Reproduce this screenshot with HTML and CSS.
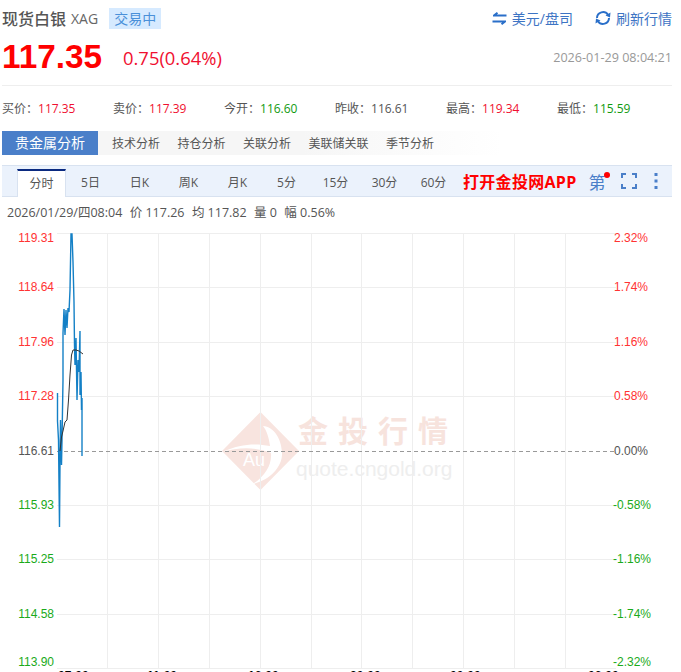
FILE: index.html
```html
<!DOCTYPE html>
<html lang="en">
<head>
    <meta charset="UTF-8">
    <title>现货白银 XAG</title>
    <link rel="stylesheet" href="styles.css">
</head>
<body>
    <div class="title-row">
        <span class="name">现货白银</span>
        <span class="code">XAG</span>
        <span class="badge">交易中</span>
        <span class="spacer"></span>
        <span class="action action-unit">
            <svg width="15" height="13" viewBox="0 0 15 13"><path d="M14.500 3.500H3M5.500 0.800L2 3.500V4.500M0.500 9.500H12M9.500 12.200L13 9.500V8.500" fill="none" stroke="#2a6fc9" stroke-width="2"/></svg>
            美元/盘司
        </span>
        <span class="action">
            <svg width="16" height="16" viewBox="0 0 16 16"><path d="M2 8A6 6 0 0 1 13 4.800M14 8A6 6 0 0 1 3 11.200" fill="none" stroke="#2a6fc9" stroke-width="2"/><path d="M15.500 2.500L15 7.500L10.500 5.500ZM0.500 13.500L1 8.500L5.500 10.500Z" fill="#2a6fc9"/></svg>
            刷新行情
        </span>
    </div>

    <div class="price-row">
        <span class="price">117.35</span>
        <span class="change">0.75(0.64%)</span>
        <span class="spacer"></span>
        <span class="time">2026-01-29 08:04:21</span>
    </div>

    <div class="quote-row">
        <div>买价：<span class="up">117.35</span></div>
        <div>卖价：<span class="up">117.39</span></div>
        <div>今开：<span class="down">116.60</span></div>
        <div>昨收：<span>116.61</span></div>
        <div>最高：<span class="up">119.34</span></div>
        <div>最低：<span class="down">115.59</span></div>
    </div>

    <div class="tabs">
        <a class="tab-main">贵金属分析</a>
        <a>技术分析</a>
        <a>持仓分析</a>
        <a>关联分析</a>
        <a>美联储关联</a>
        <a>季节分析</a>
    </div>

    <div class="toolbar">
        <a class="period active">分时</a>
        <a class="period">5日</a>
        <a class="period">日K</a>
        <a class="period">周K</a>
        <a class="period">月K</a>
        <a class="period">5分</a>
        <a class="period">15分</a>
        <a class="period">30分</a>
        <a class="period">60分</a>
        <a class="open-app">打开金投网APP</a>
        <span class="draw-btn">第<i class="dot"></i></span>
        <svg class="tool-icon" width="16" height="16" viewBox="0 0 16 16"><path d="M1 5V1H5M11 1H15V5M15 11V15H11M5 15H1V11" fill="none" stroke="#4a7fc9" stroke-width="2"/></svg>
        <svg class="tool-icon more" width="4" height="16" viewBox="0 0 4 16"><rect x="0.500" y="0" width="3" height="3" fill="#4a7fc9"/><rect x="0.500" y="6.500" width="3" height="3" fill="#4a7fc9"/><rect x="0.500" y="13" width="3" height="3" fill="#4a7fc9"/></svg>
    </div>

    <div class="info-row">
        <span>2026/01/29/四08:04</span>
        <span>价 117.26</span>
        <span>均 117.82</span>
        <span>量 0</span>
        <span>幅 0.56%</span>
    </div>

    <!-- chart canvas, coordinates are page y -->
    <svg class="chart" width="681" height="447" viewBox="0 225 681 447">
        <!-- watermark -->
        <path d="M260.500 412L299 451L260.500 490L222 451Z" fill="#f8e4df"/>
        <path d="M222 452C240 444 255 443 270 446C269 438 267 431 263 426C274 427 281 438 282 452C283 467 270 480 253 484C265 476 272 465 271 453C255 447 240 447 222 452Z" fill="#fff"/>
        <text class="wm-au" x="243" y="466">Au</text>
        <text class="wm-title" x="298" y="442">金投行情</text>
        <text class="wm-url" x="296" y="476">quote.cngold.org</text>

        <!-- grid -->
        <path class="grid" d="M57 233.500H616M57 287.500H616M57 342.500H616M57 396.500H616M57 505.500H616M57 559.500H616M57 614.500H616M57 668.500H616"/>
        <path class="grid" d="M107.500 234V668M158.500 234V668M209.500 234V668M260.500 234V668M311.500 234V668M361.500 234V668M412.500 234V668M463.500 234V668M514.500 234V668M565.500 234V668"/>
        <path class="zero" d="M57 451.500H616"/>

        <!-- price and average -->
        <polyline class="line-price" points="57.500,393 57.500,421 58.500,440 59.500,527 60,462 60.500,420 61.500,465 62,440 63,380 63,333 64,309 65,335 66,310 67,328 68,308 69,312 70,290 71,234 72,234 73,262 74,302 74.500,345 75,365 76,338 77,400 78,360 79,372 80,331 80,395 81,372 81.500,410"/>
        <polyline class="line-price" points="82,456 82,398"/>
        <polyline class="line-avg" points="60,451 61.500,437 63,431 65,422 67,420 68.500,400 70,375 71.500,355 73,350 76,350 79,351 83,354"/>

        <!-- left axis -->
        <g class="axis">
            <text class="up" x="54" y="242">119.31</text>
            <text class="up" x="54" y="291">118.64</text>
            <text class="up" x="54" y="346">117.96</text>
            <text class="up" x="54" y="400">117.28</text>
            <text class="flat" x="54" y="455">116.61</text>
            <text class="dn" x="54" y="509">115.93</text>
            <text class="dn" x="54" y="563">115.25</text>
            <text class="dn" x="54" y="618">114.58</text>
            <text class="dn" x="54" y="666">113.90</text>
        </g>
        <!-- right axis -->
        <g class="axis">
            <text class="up" x="648" y="242">2.32%</text>
            <text class="up" x="648" y="291">1.74%</text>
            <text class="up" x="648" y="346">1.16%</text>
            <text class="up" x="648" y="400">0.58%</text>
            <text class="flat" x="648" y="455">0.00%</text>
            <text class="dn" x="651" y="509">-0.58%</text>
            <text class="dn" x="651" y="563">-1.16%</text>
            <text class="dn" x="651" y="618">-1.74%</text>
            <text class="dn" x="651" y="666">-2.32%</text>
        </g>
        <!-- time axis, cut off by the window -->
        <g class="time-axis">
            <text x="58" y="680">07:00</text>
            <text x="147" y="680">11:00</text>
            <text x="248" y="680">16:00</text>
            <text x="350" y="680">20:00</text>
            <text x="450" y="680">00:00</text>
            <text x="588" y="680">06:00</text>
        </g>
    </svg>
</body>
</html>
```
FILE: styles.css
```css
html, body {
    height: 672px;
    overflow: hidden;
}
body {
    margin: 0;
    background: #fff;
    color: #555;
    font-family: "Open Sans", "Noto Sans CJK SC", sans-serif;
    font-size: 12px;
}
a {
    display: block;
}
.spacer {
    flex: 1;
}
.up {
    color: #f01030;
}
.down {
    color: #109a10;
}
.title-row {
    display: flex;
    align-items: center;
    height: 36px;
    padding: 0 9px 0 2px;
}
.name {
    font-size: 16px;
    font-weight: 500;
    color: #555;
}
.code {
    margin-left: 5px;
    font-size: 14px;
    color: #666;
}
.badge {
    margin-left: 11px;
    padding: 0 5px;
    height: 21px;
    line-height: 21px;
    background: #d6eaff;
    color: #4a90d9;
    font-size: 14px;
}
.action {
    display: flex;
    align-items: center;
    gap: 5px;
    font-size: 14px;
    color: #3d74c4;
}
.action-unit {
    margin-right: 22px;
}
.price-row {
    display: flex;
    align-items: center;
    height: 42px;
    padding: 0 9px 0 2px;
}
.price {
    font-family: "Liberation Sans", sans-serif;
    font-size: 33.300px;
    font-weight: bold;
    color: #f00;
}
.change {
    margin-left: 21px;
    font-size: 18.400px;
    color: #f01030;
}
.time {
    font-size: 12.600px;
    color: #999;
}
.quote-row {
    display: grid;
    grid-template-columns: repeat(6, 111px);
    align-items: center;
    margin: 7px 9px 0 2px;
    height: 45px;
    box-sizing: border-box;
    border-top: 1px solid #eee;
}
.tabs {
    display: flex;
    align-items: center;
    height: 24px;
    margin: 1px 0 0 2px;
    width: 500px;
    background: linear-gradient(to right, #f6f6f6 60%, #fff);
}
.tabs a {
    margin-right: 17.500px;
}
.tabs .tab-main {
    width: 96px;
    height: 24px;
    margin-right: 14px;
    line-height: 24px;
    text-align: center;
    background: #4a7fc9;
    color: #fff;
    font-size: 14px;
}
.toolbar {
    display: flex;
    align-items: flex-end;
    height: 30px;
    margin: 10px 9px 0 2px;
    padding-left: 15px;
    background: #ebf2fc;
    border-top: 1px solid #d8e2f0;
    border-bottom: 1px solid #d8e2f0;
}
.period {
    width: 49px;
    height: 27px;
    line-height: 28px;
    text-align: center;
    box-sizing: border-box;
}
.period.active {
    height: 28px;
    margin-bottom: -1px;
    line-height: 26px;
    background: #fff;
    border-top: 2px solid #0b2a80;
    border-left: 1px solid #d8e2f0;
    border-right: 1px solid #d8e2f0;
}
.open-app {
    align-self: center;
    margin-left: 5px;
    font-size: 16px;
    font-weight: bold;
    letter-spacing: 0.300px;
    color: #f00;
}
.draw-btn {
    position: relative;
    align-self: center;
    margin-left: 12px;
    font-size: 17px;
    color: #4a7fc9;
}
.dot {
    position: absolute;
    top: 3px;
    right: -4px;
    width: 6px;
    height: 6px;
    border-radius: 50%;
    background: #f00;
}
.tool-icon {
    align-self: center;
    margin-left: 15px;
}
.more {
    margin-left: 17px;
}
.info-row {
    display: flex;
    gap: 7.400px;
    align-items: center;
    height: 28px;
    padding-left: 7px;
    font-size: 12.500px;
}
.chart {
    display: block;
}
.grid {
    fill: none;
    stroke: #eee;
    stroke-width: 1;
}
.zero {
    fill: none;
    stroke: #999;
    stroke-width: 1;
    stroke-dasharray: 4 3;
}
.line-price {
    fill: none;
    stroke: #1480c6;
    stroke-width: 1.400;
}
.line-avg {
    fill: none;
    stroke: #333;
    stroke-width: 1;
}
.axis text {
    font-family: "Liberation Sans", sans-serif;
    font-size: 12px;
    text-anchor: end;
}
.axis .up {
    fill: #f33;
}
.axis .flat {
    fill: #555;
}
.axis .dn {
    fill: #1aaa1a;
}
.time-axis text {
    font-family: "Liberation Sans", sans-serif;
    font-size: 12px;
    font-weight: bold;
    fill: #000;
}
.wm-au {
    font-family: "Liberation Sans", sans-serif;
    font-size: 18px;
    fill: #fff;
}
.wm-title {
    font-family: "Noto Sans CJK SC", sans-serif;
    font-size: 30px;
    font-weight: bold;
    letter-spacing: 10px;
    fill: #f7e3dd;
}
.wm-url {
    font-family: "Liberation Sans", sans-serif;
    font-size: 21px;
    fill: #eee;
}
```
